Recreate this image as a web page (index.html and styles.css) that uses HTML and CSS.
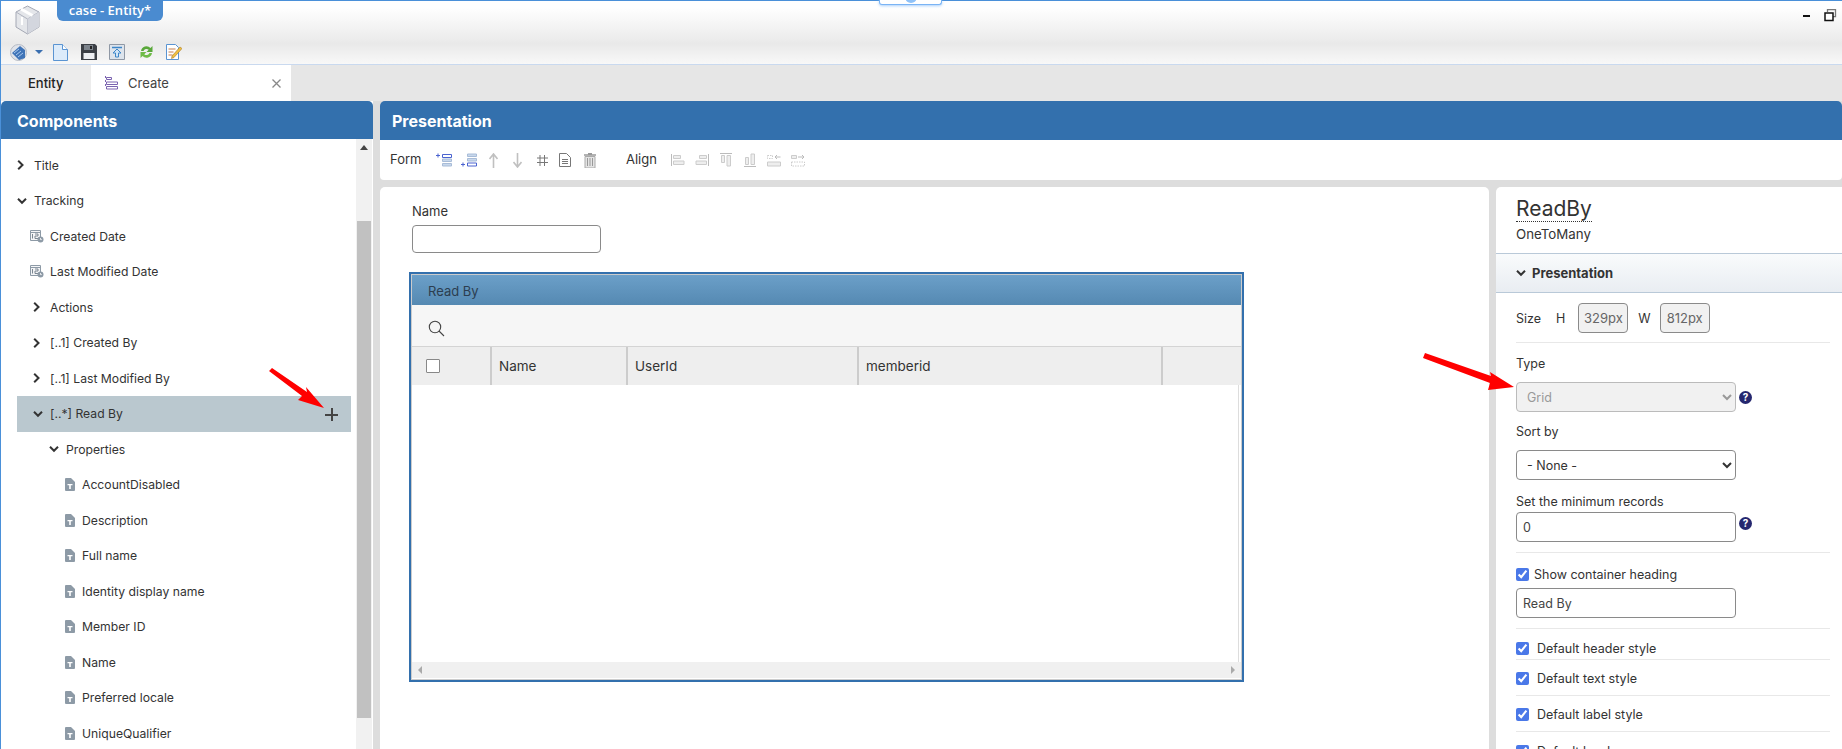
FILE: index.html
```html
<!DOCTYPE html>
<html lang="en">
  <head>
    <meta charset="UTF-8" />
    <title>case - Entity*</title>
    <link rel="stylesheet" href="styles.css">
  </head>
  <body>
    <svg class="defs" width="0" height="0">
      <symbol id="chev-r" viewBox="0 0 8 10"><path d="M1.200 .8L5.500 5 1.200 9.200" fill="none" stroke="#333" stroke-width="2"/></symbol>
      <symbol id="chev-d" viewBox="0 0 10 8"><path d="M1 1.800l4 4 4-4" fill="none" stroke="#333" stroke-width="2"/></symbol>
      <symbol id="text-file" viewBox="0 0 10 13"><path d="M0 1a1 1 0 0 1 1-1h5l4 4v8a1 1 0 0 1-1 1H1a1 1 0 0 1-1-1z" fill="#8d9aa6"/><path d="M2.500 6h5v1.300H5.800V11H4.200V7.300H2.500z" fill="#fff"/></symbol>
      <symbol id="date-file" viewBox="0 0 14 13"><path d="M.5.5h10v10H.5z" fill="#f4f5f7" stroke="#8d9aa6"/><path d="M.5 2.500h10" stroke="#8d9aa6"/><path d="M2.500 4v4.500M5 4h3v2H5v2.500h3" fill="none" stroke="#6d7a86" stroke-width=".9"/><circle cx="10.500" cy="9.500" r="3" fill="#8d9aa6"/><path d="M10.500 8v1.600h1.300" stroke="#fff" fill="none" stroke-width=".8"/></symbol>
    </svg>

    <div class="app">
      <header class="topbar">
        <div class="notch"><span></span></div>
        <div class="topbar__row">
          <svg class="logo" width="25" height="30" viewBox="0 0 25 30">
            <path d="M12.500 1L24 7v15l-11.500 7L1 22V7z" fill="#e4e6ea" stroke="#a4a8b4"/>
            <path d="M1 7l11.500 7L24 7M12.500 14v15" fill="none" stroke="#b0b4c0"/>
            <path d="M12.500 14L24 7v15l-11.500 7z" fill="#d3d6de"/>
            <path d="M6 4l11.500 6.500" stroke="#fff" stroke-width="3"/>
            <path d="M7 12v8" stroke="#fff" stroke-width="2"/>
          </svg>
          <div class="title-tab">case - Entity*</div>
          <div class="win-btns">
            <svg width="13" height="13" viewBox="0 0 13 13"><path d="M3 6h7v2H3z" fill="#111"/></svg>
            <svg width="13" height="13" viewBox="0 0 13 13"><path d="M3.500 3V.7h8v7H9" fill="none" stroke="#777" stroke-width="1.300"/><path d="M1 4h8v7.500H1z" fill="#fff" stroke="#111" stroke-width="1.500"/></svg>
          </div>
        </div>
        <div class="quick">
          <svg class="quick__globe" width="17" height="17" viewBox="0 0 17 17"><circle cx="8.500" cy="8.500" r="8" fill="#dfe3ea" stroke="#b5bac4"/><path d="M2 9l8-7 5 4v8l-6 2z" fill="#3f74b8"/><path d="M4 9l5-4M6 11l5-4M8 13l5-4" stroke="#a8c8ee"/></svg>
          <svg class="quick__caret" width="8" height="4" viewBox="0 0 8 4"><path d="M0 0h8L4 4z" fill="#3a6fb0"/></svg>
          <svg class="quick__doc" width="15" height="17" viewBox="0 0 15 17"><path d="M.5.500h9l5 5v11H.5z" fill="#dcebfa" stroke="#5a94d2"/><path d="M9.500.500v5h5" fill="#fff" stroke="#5a94d2"/></svg>
          <svg class="quick__save" width="16" height="16" viewBox="0 0 16 16"><path d="M0 0h14l2 2v14H0z" fill="#3c4046"/><path d="M3 1h9v5H3z" fill="#7d848c"/><path d="M9 2h2v3H9z" fill="#222"/><path d="M2.500 9h11v6h-11z" fill="#eef0f3"/></svg>
          <svg class="quick__up" width="16" height="16" viewBox="0 0 16 16"><path d="M.500.500h15v15H.500z" fill="#dde4ec" stroke="#8f98a5"/><path d="M3 3.500h10" stroke="#3d86c8" stroke-width="1.500"/><path d="M8 5l4 4h-2.500v4h-3V9H4z" fill="#cfe4f7" stroke="#3d86c8"/></svg>
          <svg class="quick__sync" width="15" height="16" viewBox="0 0 15 16"><path d="M2 7a5.500 5.500 0 0 1 9.500-3L13.500 2v6h-6l2.200-2.200A3.200 3.200 0 0 0 4.500 7z" fill="#59a83a"/><path d="M13 9a5.500 5.500 0 0 1-9.500 3L1.500 14V8h6l-2.200 2.200A3.200 3.200 0 0 0 10.500 9z" fill="#6fbb48"/></svg>
          <svg class="quick__edit" width="16" height="16" viewBox="0 0 16 16"><path d="M.500.500h9l3 3v12H.500z" fill="#fff" stroke="#5a94d2"/><path d="M2.500 5h7M2.500 8h5M2.500 11h4" stroke="#c77f4a"/><path d="M6 12l8-9 2 1.500-8 9-2.500 1z" fill="#f0c040" stroke="#a8792a" stroke-width=".6"/></svg>
        </div>
      </header>

      <nav class="tabs">
        <div class="tab tab--entity">Entity</div>
        <div class="tab tab--active">
          <svg width="13" height="14" viewBox="0 0 13 14"><path d="M.5 0v2M.5 4v2M.5 8v2" stroke="#7a62b0"/><path d="M1.500 1.500h5v2h-5zM1.500 6h11v2.500h-11zM1.500 10.500h11v2.500h-11z" fill="#fff" stroke="#7a62b0"/></svg>
          <span class="tab__label">Create</span>
          <svg class="tab__close" width="9" height="9" viewBox="0 0 9 9"><path d="M.5.5l8 8M8.500.5l-8 8" stroke="#888" stroke-width="1.300"/></svg>
        </div>
      </nav>

      <div class="workspace">
        <section class="components">
          <h2 class="panel-head">Components</h2>
          <div class="components__body">
            <ul class="tree">
              <li class="tree__row lvl-0"><svg class="chev" width="8" height="10"><use href="#chev-r"/></svg>Title</li>
              <li class="tree__row lvl-0"><svg class="chev chev--down" width="10" height="8"><use href="#chev-d"/></svg>Tracking</li>
              <li class="tree__row lvl-1"><svg class="ico" width="14" height="13"><use href="#date-file"/></svg>Created Date</li>
              <li class="tree__row lvl-1"><svg class="ico" width="14" height="13"><use href="#date-file"/></svg>Last Modified Date</li>
              <li class="tree__row lvl-2"><svg class="chev" width="8" height="10"><use href="#chev-r"/></svg>Actions</li>
              <li class="tree__row lvl-2"><svg class="chev" width="8" height="10"><use href="#chev-r"/></svg>[..1] Created By</li>
              <li class="tree__row lvl-2"><svg class="chev" width="8" height="10"><use href="#chev-r"/></svg>[..1] Last Modified By</li>
              <li class="tree__row lvl-2 tree__row--selected"><svg class="chev chev--down" width="10" height="8"><use href="#chev-d"/></svg>[..*] Read By<span class="tree__add"></span></li>
              <li class="tree__row lvl-3"><svg class="chev chev--down" width="10" height="8"><use href="#chev-d"/></svg>Properties</li>
              <li class="tree__row lvl-4"><svg class="ico" width="10" height="13"><use href="#text-file"/></svg>AccountDisabled</li>
              <li class="tree__row lvl-4"><svg class="ico" width="10" height="13"><use href="#text-file"/></svg>Description</li>
              <li class="tree__row lvl-4"><svg class="ico" width="10" height="13"><use href="#text-file"/></svg>Full name</li>
              <li class="tree__row lvl-4"><svg class="ico" width="10" height="13"><use href="#text-file"/></svg>Identity display name</li>
              <li class="tree__row lvl-4"><svg class="ico" width="10" height="13"><use href="#text-file"/></svg>Member ID</li>
              <li class="tree__row lvl-4"><svg class="ico" width="10" height="13"><use href="#text-file"/></svg>Name</li>
              <li class="tree__row lvl-4"><svg class="ico" width="10" height="13"><use href="#text-file"/></svg>Preferred locale</li>
              <li class="tree__row lvl-4"><svg class="ico" width="10" height="13"><use href="#text-file"/></svg>UniqueQualifier</li>
            </ul>
            <div class="vscroll">
              <svg width="8" height="5" viewBox="0 0 8 5"><path d="M0 5l4-5 4 5z" fill="#444"/></svg>
              <div class="vscroll__thumb"></div>
            </div>
          </div>
        </section>

        <section class="designer">
          <h2 class="panel-head panel-head--designer">Presentation</h2>
          <div class="form-bar">
            <span class="form-bar__label">Form</span>
            <svg class="form-bar__ico" width="16" height="14" viewBox="0 0 16 14"><path d="M0 2.500h4M2 .5v4" stroke="#4a63d0"/><path d="M6.500 1.500h9v3h-9z" fill="#fff" stroke="#4a63d0"/><path d="M6.500 6h9v2.500h-9zM6.500 10.500h9V13h-9z" fill="#c8d8ec" stroke="#a8bcd8"/></svg>
            <svg class="form-bar__ico form-bar__ico--before-arrows" width="16" height="14" viewBox="0 0 16 14"><path d="M6.500 1h9v2.500h-9zM6.500 5.500h9V8h-9z" fill="#c8d8ec" stroke="#a8bcd8"/><path d="M6.500 10h9v3h-9z" fill="#fff" stroke="#4a63d0"/><path d="M0 11.500h4M2 9.500v4" stroke="#4a63d0"/></svg>
            <svg class="form-bar__ico form-bar__ico--arrow" width="9" height="15" viewBox="0 0 9 15"><path d="M4.500 15V2M.5 6l4-5 4 5" fill="none" stroke="#c0c0c0" stroke-width="1.600"/></svg>
            <svg class="form-bar__ico form-bar__ico--arrow" width="9" height="15" viewBox="0 0 9 15"><path d="M4.500 0v13M.5 9l4 5 4-5" fill="none" stroke="#c0c0c0" stroke-width="1.600"/></svg>
            <svg class="form-bar__ico form-bar__ico--grid" width="11" height="11" viewBox="0 0 11 11"><path d="M3 0v11M7.500 0v11M0 3h11M0 7.500h11" stroke="#777" stroke-width="1"/></svg>
            <svg class="form-bar__ico form-bar__ico--doc" width="12" height="14" viewBox="0 0 12 14"><path d="M.5.500h7l4 4v9H.5z" fill="#fff" stroke="#777"/><path d="M3 6.500h6M3 8.500h6M3 10.500h6" stroke="#777"/></svg>
            <svg class="form-bar__ico form-bar__ico--trash" width="14" height="15" viewBox="0 0 14 15"><path d="M1 2h12M5 .5h4" stroke="#999" stroke-width="1.500"/><path d="M2 3.500h10V15H2z" fill="#e4e4e4" stroke="#aaa"/><path d="M4.500 5v8M7 5v8M9.500 5v8" stroke="#999"/></svg>
            <span class="form-bar__label form-bar__label--align">Align</span>
            <svg class="form-bar__ico form-bar__ico--al" width="14" height="14" viewBox="0 0 14 14"><path d="M.5 1v12" stroke="#bbb"/><path d="M2.500 2.500h7v3h-7zM2.500 8h10.500v3.500H2.500z" fill="#eee" stroke="#ccc"/></svg>
            <svg class="form-bar__ico form-bar__ico--al" width="14" height="14" viewBox="0 0 14 14"><path d="M13.500 1v12" stroke="#bbb"/><path d="M4.500 2.500h7v3h-7zM1 8h10.500v3.500H1z" fill="#eee" stroke="#ccc"/></svg>
            <svg class="form-bar__ico form-bar__ico--al" width="14" height="14" viewBox="0 0 14 14"><path d="M1 .5h12" stroke="#bbb"/><path d="M2.500 2.500h3v7h-3zM8 2.500h3.500V13H8z" fill="#eee" stroke="#ccc"/></svg>
            <svg class="form-bar__ico form-bar__ico--al" width="14" height="14" viewBox="0 0 14 14"><path d="M1 13.500h12" stroke="#bbb"/><path d="M2.500 4.500h3v7h-3zM8 1h3.500v10.500H8z" fill="#eee" stroke="#ccc"/></svg>
            <svg class="form-bar__ico form-bar__ico--al" width="14" height="13" viewBox="0 0 14 13"><path d="M.5 1.500h5v3h-5z" fill="none" stroke="#ccc" stroke-dasharray="1.500 1"/><path d="M13.500 3H8M10 1L8 3l2 2" fill="none" stroke="#bbb"/><path d="M.5 8h13v4H.5z" fill="#eee" stroke="#ccc"/></svg>
            <svg class="form-bar__ico form-bar__ico--al" width="14" height="13" viewBox="0 0 14 13"><path d="M.5 1.500h5v3h-5z" fill="#eee" stroke="#ccc"/><path d="M7 3h6M11 1l2 2-2 2" fill="none" stroke="#bbb"/><path d="M.5 8h13v4H.5z" fill="none" stroke="#ccc" stroke-dasharray="1.500 1"/></svg>
          </div>

          <div class="designer__main">
            <div class="canvas">
              <div class="name-field">
                <label class="field-label">Name</label>
                <input class="text-input name-field__input" type="text" />
              </div>
              <div class="grid">
                <div class="grid__title">Read By</div>
                <div class="grid__search">
                  <svg width="17" height="17" viewBox="0 0 17 17"><circle cx="7" cy="7" r="5.700" fill="none" stroke="#444" stroke-width="1.100"/><path d="M11 11l5 5" stroke="#444" stroke-width="1.100"/></svg>
                </div>
                <div class="grid__head">
                  <div class="grid__cell grid__cell--check"><span class="fake-check"></span></div>
                  <div class="grid__cell grid__cell--name">Name</div>
                  <div class="grid__cell grid__cell--user">UserId</div>
                  <div class="grid__cell grid__cell--member">memberid</div>
                  <div class="grid__cell grid__cell--rest"></div>
                </div>
                <div class="grid__body"></div>
                <div class="hscroll">
                  <svg width="4" height="8" viewBox="0 0 4 8"><path d="M4 0L0 4l4 4z" fill="#aaa"/></svg>
                  <svg width="4" height="8" viewBox="0 0 4 8"><path d="M0 0l4 4-4 4z" fill="#aaa"/></svg>
                </div>
              </div>
            </div>

            <aside class="props">
              <div class="props__top">
                <div class="props__name">ReadBy</div>
                <div class="props__type">OneToMany</div>
              </div>
              <div class="props__section">
                <svg width="10" height="8"><use href="#chev-d"/></svg>
                Presentation
              </div>
              <div class="props__form">
                <div class="size-row">
                  <span class="size-row__size">Size</span>
                  <span class="size-row__h">H</span>
                  <span class="size-box">329px</span>
                  <span class="size-row__w">W</span>
                  <span class="size-box">812px</span>
                </div>
                <div class="block block--type">
                  <label class="field-label">Type</label>
                  <div class="with-help">
                    <select class="select" disabled><option>Grid</option></select>
                    <span class="help">?</span>
                  </div>
                  <label class="field-label field-label--sort">Sort by</label>
                  <select class="select"><option>- None -</option></select>
                  <label class="field-label field-label--min">Set the minimum records</label>
                  <div class="with-help with-help--top">
                    <input class="text-input text-input--wide" type="text" value="0" />
                    <span class="help">?</span>
                  </div>
                </div>
                <div class="block block--heading">
                  <label class="check-row check-row--tight"><input type="checkbox" checked />Show container heading</label>
                  <input class="text-input text-input--wide" type="text" value="Read By" />
                </div>
                <div class="check-line check-line--a"><label class="check-row"><input type="checkbox" checked />Default header style</label></div>
                <div class="check-line check-line--b"><label class="check-row"><input type="checkbox" checked />Default text style</label></div>
                <div class="check-line check-line--b"><label class="check-row"><input type="checkbox" checked />Default label style</label></div>
                <div class="check-line check-line--last"><label class="check-row"><input type="checkbox" checked />Default border</label></div>
              </div>
            </aside>
          </div>
        </section>
      </div>

      <svg class="pointer pointer--add" width="60" height="50" viewBox="0 0 60 50">
        <path d="M0 3L3 0 38 24 37 19 55 40 29 32 33 28z" fill="#f00"/>
      </svg>
      <svg class="pointer pointer--type" width="96" height="40" viewBox="0 0 96 40">
        <path d="M2 0L68 23 67 19 91 34 65 37 67 30 0 5z" fill="#f00"/>
      </svg>
    </div>
  </body>
</html>
```

FILE: styles.css
```css
* {
  margin: 0;
  padding: 0;
  box-sizing: border-box;
}

html,
body {
  height: 100%;
  overflow: hidden;
}

body {
  font-family: Inter, "Liberation Sans", sans-serif;
  font-size: 13px;
  color: #333;
  background-color: #ddd;
}

.defs {
  position: absolute;
}

.app {
  position: relative;
  display: flex;
  flex-direction: column;
  height: 749px;
  border-left: 1px solid #4a90d9;
}

/* top bar */

.topbar {
  position: relative;
  height: 65px;
  border-top: 1px solid #4a90d9;
  border-bottom: 1px solid #c9d9ef;
  background: linear-gradient(#fff 10%, #e9e9e9 68%, #f8f8f8);
}

.notch {
  position: absolute;
  top: -1px;
  left: 878px;
  width: 63px;
  height: 5px;
  background-color: #fff;
  border: 1px solid #7ab4f5;
  border-top: none;
  border-radius: 0 0 3px 3px;
  box-shadow: 0 1px 3px #a9d0fa;
  overflow: hidden;
}

.notch span {
  display: block;
  width: 12px;
  height: 12px;
  margin: -9px auto 0;
  border-radius: 50%;
  background-color: #8fc2f8;
}

.topbar__row {
  display: flex;
  height: 38px;
}

.logo {
  margin: 4px 17px 0 14px;
}

.title-tab {
  width: 106px;
  height: 21px;
  margin-top: -1px;
  text-align: center;
  line-height: 20px;
  font-size: 13px;
  font-weight: 600;
  color: #fff;
  background-color: #4a8bd0;
  border-radius: 0 0 6px 6px;
  font-family: "Open Sans", sans-serif;
}

.win-btns {
  display: flex;
  gap: 11px;
  margin: 8px 5px 0 auto;
}

.quick {
  display: flex;
  align-items: center;
  height: 20px;
  margin-top: 3px;
  padding-left: 9px;
}

.quick__caret {
  margin-left: 8px;
}

.quick__doc {
  margin-left: 10px;
}

.quick__save {
  margin-left: 13px;
}

.quick__up {
  margin-left: 12px;
}

.quick__sync {
  margin-left: 14px;
}

.quick__edit {
  margin-left: 12px;
}

/* tabs */

.tabs {
  display: flex;
  height: 36px;
  background-color: #e6e6e6;
}

.tab {
  display: flex;
  align-items: center;
}

.tab--entity {
  width: 90px;
  padding-left: 27px;
  font-weight: 500;
  color: #222;
  background-color: #ececec;
}

.tab--active {
  width: 200px;
  padding-left: 14px;
  color: #444;
  background-color: #fff;
}

.tab__label {
  margin-left: 10px;
}

.tab__close {
  margin-left: auto;
  margin-right: 10px;
}

/* panels */

.workspace {
  flex: 1;
  display: flex;
  gap: 7px;
  min-height: 0;
}

.panel-head {
  height: 38px;
  padding: 1px 0 0 16px;
  line-height: 38px;
  font-size: 16px;
  font-weight: 700;
  color: #fff;
  background-color: #3370ad;
  border-radius: 5px 5px 0 0;
}

.panel-head--designer {
  height: 39px;
  padding-left: 12px;
}

.components {
  display: flex;
  flex-direction: column;
  width: 372px;
  background-color: #fff;
}

.components__body {
  flex: 1;
  display: flex;
  min-height: 0;
  padding-right: 1px;
  overflow: hidden;
}

.tree {
  flex: 1;
  list-style: none;
  padding: 8.5px 5px 0 16px;
}

.tree__row {
  position: relative;
  display: flex;
  align-items: center;
  height: 35.5px;
  font-size: 12.2px;
  white-space: nowrap;
}

.lvl-0 .chev {
  margin-right: 9px;
}

.lvl-0 .chev--down {
  margin-right: 7px;
}

.lvl-1 {
  padding-left: 13px;
}

.lvl-1 .ico {
  margin-right: 6px;
}

.lvl-2 {
  padding-left: 16px;
}

.lvl-2 .chev {
  margin-right: 9px;
}

.lvl-2 .chev--down {
  margin-right: 7px;
}

.lvl-3 {
  padding-left: 32px;
}

.lvl-3 .chev {
  margin-right: 7px;
}

.lvl-4 {
  padding-left: 48px;
}

.lvl-4 .ico {
  margin-right: 7px;
}

.tree__row--selected {
  background-color: #bac8cf;
}

.tree__add {
  position: relative;
  width: 13px;
  height: 13px;
  margin-left: auto;
  margin-right: 13px;
  margin-top: 2px;
}

.tree__add::before,
.tree__add::after {
  content: '';
  position: absolute;
  background-color: #444;
}

.tree__add::before {
  left: 0;
  right: 0;
  top: 5.5px;
  height: 2px;
}

.tree__add::after {
  top: 0;
  bottom: 0;
  left: 5.5px;
  width: 2px;
}

.vscroll {
  display: flex;
  flex-direction: column;
  align-items: center;
  width: 16px;
  padding-top: 6px;
  background-color: #f1f1f1;
}

.vscroll__thumb {
  width: 14px;
  height: 497px;
  margin-top: 71px;
  background-color: #c1c1c1;
}

.designer {
  flex: 1;
  display: flex;
  flex-direction: column;
  min-width: 0;
}

.form-bar {
  display: flex;
  align-items: center;
  height: 40px;
  padding-left: 10px;
  background-color: #fff;
  border-radius: 0 0 4px 4px;
}

.form-bar__label {
  width: 46px;
  margin-top: -3px;
}

.form-bar__label--align {
  width: 45px;
}

.form-bar__ico {
  margin-right: 9px;
}

.form-bar__ico--before-arrows {
  margin-right: 12px;
}

.form-bar__ico--arrow {
  margin-right: 15px;
}

.form-bar__ico--grid {
  margin-right: 11px;
}

.form-bar__ico--doc {
  margin-right: 12px;
}

.form-bar__ico--trash {
  margin-right: 29px;
}

.form-bar__ico--al {
  margin-right: 10px;
}

.designer__main {
  flex: 1;
  display: flex;
  gap: 7px;
  min-height: 0;
  margin-top: 7px;
}

.canvas {
  width: 1109px;
  padding: 15px 0 0 29px;
  background-color: #fff;
  border-radius: 5px 5px 0 0;
}

.field-label {
  display: block;
  font-size: 12.5px;
  line-height: 18px;
}

.name-field {
  margin-left: 3px;
}

.name-field .field-label {
  font-size: 13px;
}

.name-field__input {
  display: block;
  width: 189px;
  margin-top: 5px;
}

.text-input {
  height: 28px;
  padding: 0 6px;
  font-family: inherit;
  font-size: 12.5px;
  color: #444;
  background-color: #fff;
  border: 1px solid #8a8a8a;
  border-radius: 4px;
}

.grid {
  display: flex;
  flex-direction: column;
  width: 835px;
  height: 410px;
  margin-top: 19px;
  background-color: #fff;
  border: 2px solid #3370ad;
  outline: 1px solid #ccc;
  outline-offset: -3px;
}

.grid__title {
  height: 31px;
  padding: 3px 0 0 17px;
  line-height: 28px;
  font-size: 13px;
  color: #2c3e50;
  background: linear-gradient(#6ca0c9, #5589b2);
}

.grid__search {
  display: flex;
  align-items: center;
  height: 42px;
  padding: 5px 0 0 17px;
  background-color: #f6f6f6;
  border-bottom: 1px solid #d4d4d4;
}

.grid__head {
  display: flex;
  height: 38px;
  margin-left: 1px;
  background-color: #eee;
}

.grid__cell {
  display: flex;
  align-items: center;
  padding-left: 7px;
  font-size: 13.5px;
  border-right: 2px solid #ccc;
}

.grid__cell--check {
  width: 80px;
  padding-left: 14px;
}

.grid__cell--name {
  width: 136px;
}

.grid__cell--user {
  width: 231px;
}

.grid__cell--member {
  width: 304px;
}

.grid__cell--rest {
  flex: 1;
  border-right: none;
}

.fake-check {
  width: 14px;
  height: 14px;
  background-color: #fff;
  border: 1px solid #888;
  border-radius: 1px;
}

.grid__body {
  flex: 1;
  margin-right: 3px;
  border-right: 1px solid #ddd;
}

.hscroll {
  display: flex;
  justify-content: space-between;
  align-items: center;
  height: 16px;
  margin: 0 1px 2px;
  padding: 0 6px;
  background-color: #f0f0f0;
}

/* property panel */

.props {
  flex: 1;
  background-color: #fff;
  border-radius: 5px 0 0 0;
  overflow: hidden;
}

.props__top {
  height: 66px;
  padding: 9px 0 0 20px;
}

.props__name {
  display: inline-block;
  font-size: 21px;
  line-height: 25px;
  border-bottom: 1px dotted #333;
}

.props__type {
  margin-top: 4px;
  font-size: 13.3px;
}

.props__section {
  display: flex;
  align-items: center;
  gap: 6px;
  height: 40px;
  padding-left: 20px;
  font-weight: 700;
  font-size: 13px;
  background: linear-gradient(#f9fbfc, #e9edf2);
  border-top: 1px solid #b9c9d8;
  border-bottom: 1px solid #b9c9d8;
}

.props__form {
  width: 314px;
  margin-left: 20px;
}

.size-row {
  display: flex;
  align-items: center;
  height: 50px;
  padding: 10px 0 9px;
  border-bottom: 1px solid #e8e8e8;
  font-size: 12.5px;
}

.size-row__h {
  margin-left: 15px;
  margin-right: 13px;
}

.size-row__w {
  margin-left: 10px;
  margin-right: 9px;
}

.size-box {
  width: 50px;
  height: 30px;
  line-height: 28px;
  text-align: center;
  font-size: 13px;
  color: #666;
  background-color: #f1f1f1;
  border: 1px solid #8a8a8a;
  border-radius: 4px;
}

.block--type {
  padding: 12px 0 10px;
  border-bottom: 1px solid #e8e8e8;
}

.with-help {
  display: flex;
  align-items: center;
  gap: 3px;
  margin-top: 9px;
}

.with-help--top {
  align-items: flex-start;
  margin-top: 0;
}

.with-help--top .help {
  margin-top: 5px;
}

.select {
  display: block;
  width: 220px;
  height: 30px;
  padding-left: 6px;
  font-family: inherit;
  font-size: 12.5px;
  color: #333;
  background-color: #fff;
  border: 1px solid #8a8a8a;
  border-radius: 4px;
}

.select:disabled {
  color: #999;
  background-color: #f1f1f1;
  border-color: #bbb;
  opacity: 1;
}

.field-label--sort {
  margin-top: 11px;
  margin-bottom: 9px;
}

.field-label--min {
  margin-top: 14px;
  margin-bottom: 2px;
  line-height: 16px;
}

.text-input--wide {
  display: block;
  width: 220px;
  height: 30px;
}

.help {
  flex: none;
  width: 13px;
  height: 13px;
  line-height: 13px;
  text-align: center;
  font-size: 10px;
  font-weight: 700;
  color: #fff;
  background-color: #25276f;
  border-radius: 50%;
}

.block--heading {
  padding: 13px 0 10px;
  border-bottom: 1px solid #e8e8e8;
}

.check-row {
  display: flex;
  align-items: center;
  font-size: 12.5px;
}

.check-row input {
  width: 13px;
  height: 13px;
  margin-right: 8px;
  accent-color: #4a78e8;
}

.check-row--tight {
  height: 16px;
  margin-bottom: 6px;
}

.check-row--tight input {
  margin-right: 5px;
}

.check-line {
  display: flex;
  align-items: center;
  border-bottom: 1px solid #e8e8e8;
}

.check-line--a {
  height: 31px;
  padding-top: 8px;
}

.check-line--b {
  height: 36px;
  padding-top: 2px;
}

.check-line--last {
  height: 36px;
  padding-top: 2px;
  border-bottom: none;
}

/* red callout arrows, laid over the panels */

.pointer {
  position: absolute;
}

.pointer--add {
  left: 268px;
  top: 368px;
}

.pointer--type {
  left: 1422px;
  top: 353px;
}
```
